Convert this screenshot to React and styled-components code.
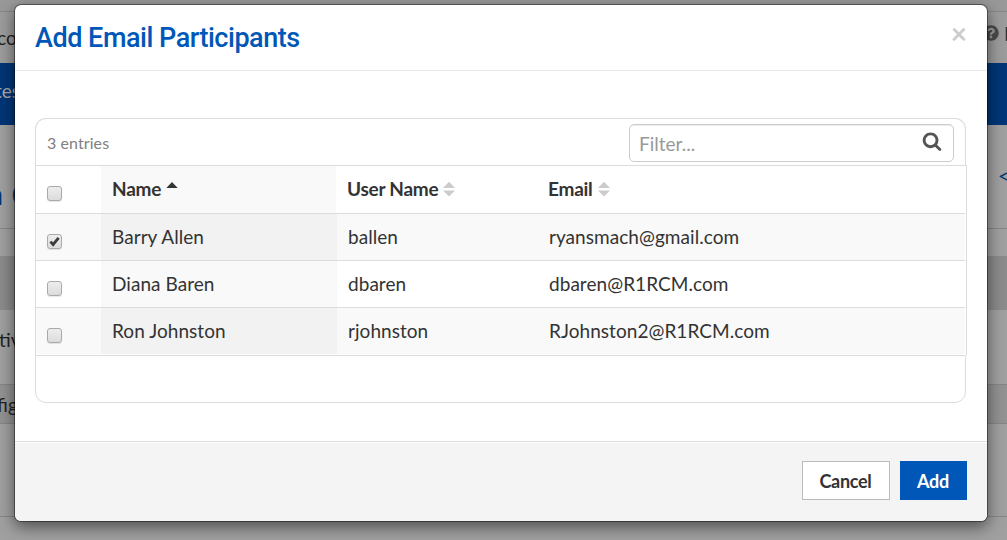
import React, { Component } from "react";
import styled, { createGlobalStyle, css } from "styled-components";
import { FaQuestionCircle } from "react-icons/fa";

const vars = {
  blue: "#0057b8",
  dimBlue: "#003677",
  text: "#333",
  line: "#dcdcdc",
  dimLine: "#868686",
  font: `Lato, "Open Sans", sans-serif`,
  headingFont: `Roboto, "Liberation Sans", sans-serif`
};

const GlobalStyle = createGlobalStyle`
  * {
    box-sizing: border-box;
  }
  body {
    margin: 0;
    overflow: hidden;
    background: #a0a0a0;
    font-family: ${vars.font};
    font-size: 19px;
    color: ${vars.text};
  }
`;

/* dimmed page under the modal */
const Page = styled.div`
  width: 1007px;
  height: 540px;
  overflow: hidden;
  display: flex;
  flex-direction: column;
`;

const PageRow = styled.div`
  flex: none;
  display: flex;
  align-items: center;
  justify-content: space-between;
  white-space: nowrap;
  height: ${props => props.height}px;
  background: ${props => props.bg || "#a0a0a0"};
  color: ${props => props.color || "#222"};
  ${props =>
    props.line &&
    css`
      border-bottom: 1px solid ${vars.dimLine};
    `}
`;

const Clipped = styled.span`
  margin-left: ${props => props.shift}px;
  padding-bottom: ${props => props.lift || 0}px;
`;

const PageHeading = styled.span`
  margin-left: -13px;
  padding-top: 38px;
  font-family: ${vars.headingFont};
  font-size: 28px;
  font-weight: 700;
  word-spacing: 2px;
  color: ${vars.dimBlue};
`;

const HelpLink = styled.span`
  display: flex;
  align-items: center;
  gap: 5px;
  width: 24px;
  padding-bottom: 9px;
  color: #333;
  svg {
    flex: none;
    color: #4a4a4a;
  }
`;

const BackLink = styled.span`
  width: 9px;
  padding-bottom: 3px;
  color: ${vars.dimBlue};
`;

/* modal */
const Overlay = styled.div`
  position: absolute;
  top: 0;
  left: 0;
  width: 1007px;
  height: 540px;
  padding: 4px 14px;
`;

const Dialog = styled.div`
  width: 974px;
  height: 518px;
  display: flex;
  flex-direction: column;
  overflow: hidden;
  background: #fff;
  background-clip: padding-box;
  border: 1px solid rgba(0, 0, 0, 0.4);
  border-radius: 7px;
  box-shadow: 0 5px 15px rgba(0, 0, 0, 0.5);
`;

const DialogHeader = styled.div`
  flex: none;
  height: 66px;
  display: flex;
  justify-content: space-between;
  padding: 17px 20px 0 20px;
  border-bottom: 1px solid #e8e8e8;

  h1 {
    margin: 0;
    font-family: ${vars.headingFont};
    font-size: 27px;
    line-height: 33px;
    font-weight: 500;
    letter-spacing: -0.48px;
    color: ${vars.blue};
  }
`;

const CloseButton = styled.button`
  height: 22px;
  padding: 0;
  border: 0;
  background: none;
  font-family: ${vars.font};
  font-size: 28px;
  font-weight: 700;
  line-height: 20px;
  color: #ccc;
`;

const DialogBody = styled.div`
  flex: 1;
  padding: 47px 20px 0;
`;

const DialogFooter = styled.div`
  flex: none;
  height: 80px;
  display: flex;
  justify-content: flex-end;
  gap: 10px;
  padding: 17px 20px 0;
  background: #f4f4f4;
  border-top: 1px solid #dadada;
  box-shadow: inset 0 1px 0 #fff;
`;

const Button = styled.button`
  width: ${props => props.width}px;
  height: 39px;
  padding: 0 1px 0 0;
  font-family: ${vars.font};
  font-size: 18px;
  font-weight: 700;
  letter-spacing: -0.3px;
  color: ${props => (props.$primary ? "#fff" : vars.text)};
  background: ${props => (props.$primary ? vars.blue : "#fff")};
  border: 1px solid ${props => (props.$primary ? vars.blue : "#bbb")};
  margin-top: 2px;
`;

/* grid */
const Toolbar = styled.div`
  width: 931px;
  height: 47px;
  display: flex;
  justify-content: space-between;
  padding: 5px 11px 0;
  border: 1px solid ${vars.line};
  border-bottom: 0;
  border-radius: 11px 11px 0 0;
`;

const Entries = styled.span`
  font-size: 16px;
  line-height: 38px;
  letter-spacing: 0.08px;
  color: #808080;
`;

const FilterBox = styled.div`
  width: 325px;
  height: 38px;
  display: flex;
  justify-content: space-between;
  align-items: center;
  padding: 0 11px 0 9px;
  border: 1px solid #ccc;
  border-radius: 5px;
  box-shadow: inset 0 1px 1px rgba(0, 0, 0, 0.075);

  input {
    width: 250px;
    padding: 0;
    border: 0;
    outline: 0;
    background: none;
    font-family: ${vars.font};
    font-size: 19px;
    &::placeholder {
      color: #999;
    }
  }
  svg {
    margin-bottom: 5px;
  }
`;

const Table = styled.div`
  width: 932px;
  padding-right: 1px;
  border: 1px solid ${vars.line};
  border-width: 1px 1px 0;
`;

const Row = styled.div`
  display: grid;
  grid-template-columns: 65px ${props => (props.$head ? "235px" : "236px")} ${props => (props.$head ? "201px" : "201px")} 1fr;
  height: ${props => props.height}px;
  background: ${props => (props.$shaded ? "#f9f9f9" : "#fff")};
  border-bottom: ${props => (props.$last ? "1px solid #fff" : `1px solid ${vars.line}`)};
  font-weight: ${props => (props.$head ? 700 : 400)};
  letter-spacing: ${props => (props.$head ? "-0.25px" : "0.05px")};
`;

const Cell = styled.div`
  display: flex;
  align-items: flex-start;
  padding: 10px 0 0 11px;
  line-height: 25px;
  background: ${props => props.bg || "transparent"};
`;

const Check = styled.span`
  width: 15px;
  height: 15px;
  margin-top: 10px;
  display: flex;
  align-items: center;
  justify-content: center;
  border: 1px solid #aaa;
  border-radius: 3px;
  background: linear-gradient(#ededed, #dcdcdc);
  box-shadow: 0 1px 1px rgba(0, 0, 0, 0.1);
`;

const SortIcon = styled.svg`
  margin: 5px 0 0 5px;
`;

const TableFooter = styled.div`
  width: 931px;
  height: 48px;
  border: 1px solid ${vars.line};
  border-radius: 0 0 11px 11px;
`;

const users = [
  { name: "Barry Allen", userName: "ballen", email: "ryansmach@gmail.com", checked: true },
  { name: "Diana Baren", userName: "dbaren", email: "dbaren@R1RCM.com" },
  { name: "Ron Johnston", userName: "rjohnston", email: "RJohnston2@R1RCM.com" }
];

const Sort = ({ asc }) => (
  <SortIcon width="12" height="16" viewBox="0 0 12 16">
    {asc ? (
      <path d="M0.3 7 6 1 11.7 7z" fill="#333" />
    ) : (
      <path d="M0 7 6 0.8 12 7zM0 9.4 6 15.6 12 9.4z" fill="#ccc" />
    )}
  </SortIcon>
);

const Checkbox = ({ checked }) => (
  <Check role="checkbox" aria-checked={!!checked}>
    {checked && (
      <svg width="11" height="11" viewBox="0 0 11 11">
        <path d="M1.4 5.6 4.1 8.5 9.6 1.8" fill="none" stroke="#3c3c3c" strokeWidth="2.8" />
      </svg>
    )}
  </Check>
);

const SearchIcon = () => (
  <svg width="20" height="20" viewBox="0 0 1792 1792" fill="#555">
    <path d="M1216 832q0-185-131.5-316.5t-316.5-131.5-316.5 131.5-131.5 316.5 131.5 316.5 316.5 131.5 316.5-131.5 131.5-316.5zm512 832q0 52-38 90t-90 38q-54 0-90-38l-343-342q-179 124-399 124-143 0-273.5-55.5t-225-150-150-225-55.5-273.5 55.5-273.5 150-225 225-150 273.5-55.5 273.5 55.5 225 150 150 225 55.5 273.5q0 220-124 399l343 343q37 37 37 90z" />
  </svg>
);

const Background = () => (
  <Page>
    <PageRow height={12} bg="#999" line />
    <PageRow height={51} bg="#9c9c9c">
      <Clipped shift={-3}>cor</Clipped>
      <HelpLink>
        <FaQuestionCircle size={16} />H
      </HelpLink>
    </PageRow>
    <PageRow height={62} bg={vars.dimBlue} color="#aaa">
      <Clipped shift={-5} lift={7}>tes</Clipped>
    </PageRow>
    <PageRow height={104} line>
      <PageHeading>n C</PageHeading>
      <BackLink>&lt;</BackLink>
    </PageRow>
    <PageRow height={27} />
    <PageRow height={54} bg="#8b8b8b" />
    <PageRow height={75} line>
      <Clipped shift={-1} lift={16}>tiv</Clipped>
    </PageRow>
    <PageRow height={39} bg="#929292" line>
      <Clipped shift={-3}>fig</Clipped>
    </PageRow>
    <PageRow height={93} line />
  </Page>
);

class App extends Component {
  renderUser = (user, index) => {
    const shaded = index % 2 === 0;
    return (
      <Row key={user.userName} height={47} $shaded={shaded} $last={index === users.length - 1}>
        <Cell>
          <Checkbox checked={user.checked} />
        </Cell>
        <Cell bg={shaded ? "#f2f2f2" : "#f9f9f9"}>{user.name}</Cell>
        <Cell>{user.userName}</Cell>
        <Cell>{user.email}</Cell>
      </Row>
    );
  };

  render() {
    return (
      <>
        <GlobalStyle />
        <Background />
        <Overlay>
          <Dialog role="dialog">
            <DialogHeader>
              <h1>Add Email Participants</h1>
              <CloseButton>×</CloseButton>
            </DialogHeader>
            <DialogBody>
              <Toolbar>
                <Entries>3 entries</Entries>
                <FilterBox>
                  <input placeholder="Filter..." />
                  <SearchIcon />
                </FilterBox>
              </Toolbar>
              <Table>
                <Row height={48} $head>
                  <Cell>
                    <Checkbox />
                  </Cell>
                  <Cell bg="#f9f9f9">
                    Name
                    <Sort asc />
                  </Cell>
                  <Cell>
                    User Name
                    <Sort />
                  </Cell>
                  <Cell>
                    Email
                    <Sort />
                  </Cell>
                </Row>
                {users.map(this.renderUser)}
              </Table>
              <TableFooter />
            </DialogBody>
            <DialogFooter>
              <Button width={88}>Cancel</Button>
              <Button width={67} $primary>
                Add
              </Button>
            </DialogFooter>
          </Dialog>
        </Overlay>
      </>
    );
  }
}

export default App;
